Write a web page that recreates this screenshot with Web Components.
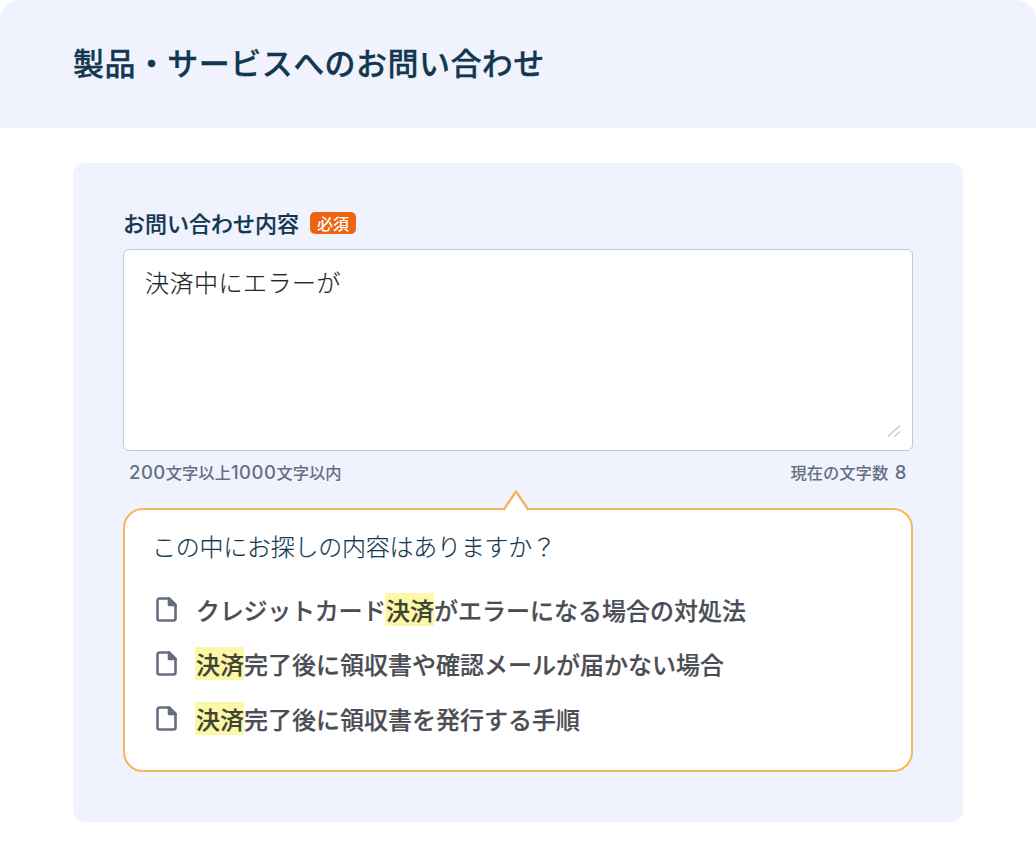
<!DOCTYPE html>
<html lang="ja">
<head>
<meta charset="utf-8">
<title>製品・サービスへのお問い合わせ</title>
<style>
  html, body { margin: 0; background: #fff; }
  body { font-family: "Noto Sans CJK JP", "Noto Sans", sans-serif; }
  .tight { letter-spacing: -0.25px; }
</style>
</head>
<body>
<contact-page>
  <page-header>製品・サービスへのお問い合わせ</page-header>
  <form-card>
    <field-label required>お問い合わせ内容</field-label>
    <text-field hint="200文字以上1000文字以内" counter="現在の文字数 8">決済中にエラーが</text-field>
    <suggest-popup heading="この中にお探しの内容はありますか？">
      <suggest-item><span class="tight">クレジットカード</span><mark-word>決済</mark-word>がエラーになる場合の対処法</suggest-item>
      <suggest-item><mark-word>決済</mark-word>完了後に領収書や確認メールが届かない場合</suggest-item>
      <suggest-item><mark-word>決済</mark-word>完了後に領収書を発行する手順</suggest-item>
    </suggest-popup>
  </form-card>
</contact-page>
<script>
class BaseElement extends HTMLElement {
  static markup = '<slot></slot>';
  connectedCallback() {
    if (this.shadowRoot) return;
    this.attachShadow({ mode: 'open' });
    const template = document.createElement('template');
    template.innerHTML = this.render();
    this.shadowRoot.appendChild(template.content.cloneNode(true));
  }
  render() {
    return this.constructor.markup;
  }
}

class ContactPage extends BaseElement {
  static markup = `
    <style>
      :host { display: block; width: 1036px; height: 860px; overflow: hidden; background: #fff; }
    </style>
    <slot></slot>`;
}

class PageHeader extends BaseElement {
  static markup = `
    <style>
      :host {
        display: flex;
        align-items: center;
        box-sizing: border-box;
        height: 128px;
        padding: 0 73px;
        background: #f0f3fe;
        border-radius: 20px 20px 0 0;
        color: #12374f;
        font-size: 31px;
        font-weight: 500;
        letter-spacing: 0.45px;
        -webkit-text-stroke: 0.3px #12374f;
      }
      h1 { margin: 0; font: inherit; position: relative; top: -3px; }
    </style>
    <h1><slot></slot></h1>`;
}

class FormCard extends BaseElement {
  static markup = `
    <style>
      :host {
        display: block;
        box-sizing: border-box;
        width: 890px;
        height: 659px;
        margin: 35px 0 0 73px;
        padding: 44px 50px 0;
        background: #f0f3fe;
        border-radius: 12px;
      }
    </style>
    <slot></slot>`;
}

class FieldLabel extends BaseElement {
  render() {
    const badge = this.hasAttribute('required') ? '<span class="badge">必須</span>' : '';
    return `
      <style>
        :host {
          display: flex;
          align-items: center;
          height: 30px;
          margin-bottom: 12px;
          color: #12374f;
          font-size: 22px;
          font-weight: 500;
          -webkit-text-stroke: 0.2px #12374f;
        }
        .text { margin-right: 11px; }
        .badge {
          display: inline-flex;
          align-items: center;
          justify-content: center;
          width: 46px;
          height: 22px;
          margin-top: 2px;
          border-radius: 5px;
          background: #ee640f;
          color: #fff;
          font-size: 16px;
          font-weight: 500;
          -webkit-text-stroke: 0;
        }
      </style>
      <span class="text"><slot></slot></span>${badge}`;
  }
}

class TextField extends BaseElement {
  render() {
    const digits = (text) => text.replace(/\d+/g, '<span class="num">$&</span>');
    return `
      <style>
        :host { display: block; }
        .box {
          position: relative;
          box-sizing: border-box;
          height: 202px;
          padding: 15px 21px;
          background: #fff;
          border: 1.5px solid #b8ccde;
          border-radius: 6px;
          color: #23272b;
          font-size: 24px;
          font-weight: 300;
          line-height: 34px;
          letter-spacing: 0.5px;
          -webkit-text-stroke: 0.15px #23272b;
        }
        .grip { position: absolute; right: 11px; bottom: 13px; }
        .meta {
          display: flex;
          justify-content: space-between;
          padding: 9px 6px 0;
          color: #667082;
          font-size: 16.3px;
          font-weight: 500;
          line-height: 24px;
          word-spacing: 3px;
        }
        .num { font-family: Inter, sans-serif; font-size: 18.5px; letter-spacing: 0.5px; }
      </style>
      <div class="box" role="textbox"><slot></slot>
        <svg class="grip" width="14" height="13" viewBox="0 0 14 13" fill="none" stroke="#c3c6cb" stroke-width="1.2">
          <path d="M1 12.5L13 1.5M7.5 12.5L13 7.5"/>
        </svg>
      </div>
      <div class="meta">
        <span>${digits(this.getAttribute('hint'))}</span>
        <span>${digits(this.getAttribute('counter'))}</span>
      </div>`;
  }
}

class SuggestPopup extends BaseElement {
  render() {
    return `
      <style>
        :host {
          display: block;
          position: relative;
          box-sizing: border-box;
          height: 264px;
          margin-top: 24px;
          padding: 17px 28px 0;
          background: #fff;
          border: 2px solid #f5b65c;
          border-radius: 20px;
        }
        .arrow { position: absolute; left: 375px; top: -21px; display: block; }
        h2 {
          margin: 0 0 20px -1px;
          color: #12374f;
          font-size: 24px;
          font-weight: 300;
          line-height: 38px;
          letter-spacing: -0.25px;
          -webkit-text-stroke: 0.15px #12374f;
        }
        .list { display: flex; flex-direction: column; gap: 6px; }
      </style>
      <svg class="arrow" width="32" height="23" viewBox="0 0 32 23">
        <path d="M3.5 21L16 2.5L28.5 21" fill="#fff" stroke="#f5b65c" stroke-width="2.4" stroke-linejoin="round"/>
      </svg>
      <h2>${this.getAttribute('heading')}</h2>
      <div class="list"><slot></slot></div>`;
  }
}

class SuggestItem extends BaseElement {
  static markup = `
    <style>
      :host {
        display: flex;
        align-items: center;
        gap: 19px;
        height: 48.6px;
        color: #4a4e54;
        font-size: 24px;
        font-weight: 500;
        -webkit-text-stroke: 0.2px #4a4e54;
      }
      svg { flex: none; margin-left: 3px; }
    </style>
    <svg width="21" height="25" viewBox="0 0 21 25" fill="none" stroke="#666d80" stroke-width="2.6" stroke-linejoin="round">
      <path d="M3.5 1.5H13L19.5 8V21.5A2 2 0 0 1 17.5 23.5H3.5A2 2 0 0 1 1.5 21.5V3.5A2 2 0 0 1 3.5 1.5Z"/>
      <path d="M13 1.5L19.5 8H13Z" fill="#666d80"/>
    </svg>
    <span><slot></slot></span>`;
}

class MarkWord extends BaseElement {
  static markup = `
    <style>
      :host {
        display: inline-block;
        margin-left: -1px;
        padding-left: 1px;
        background: #fdf8a8;
        color: #3f4430;
        line-height: 33px;
      }
    </style>
    <slot></slot>`;
}

customElements.define('contact-page', ContactPage);
customElements.define('page-header', PageHeader);
customElements.define('form-card', FormCard);
customElements.define('field-label', FieldLabel);
customElements.define('text-field', TextField);
customElements.define('suggest-popup', SuggestPopup);
customElements.define('suggest-item', SuggestItem);
customElements.define('mark-word', MarkWord);
</script>
</body>
</html>
